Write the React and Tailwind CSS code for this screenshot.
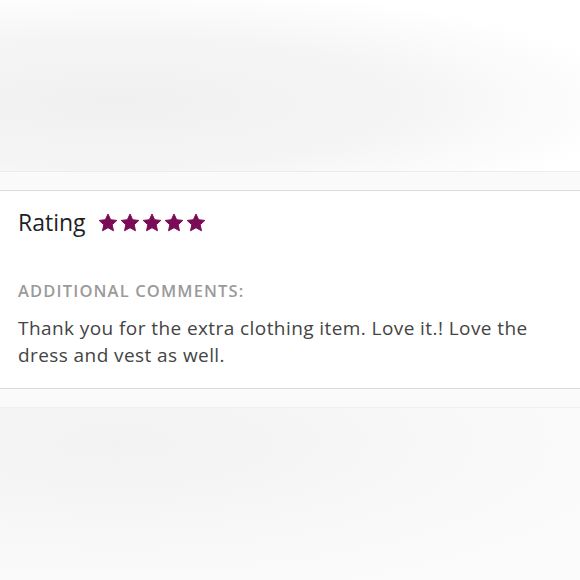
export default function App() {
  const Star = () => (
    <svg width="20" height="19" viewBox="0 0 24 23" className="block">
      <path d="M12 1.2l3.2 6.9 7.5.9-5.6 5.1 1.5 7.4L12 17.8l-6.6 3.7 1.5-7.4L1.3 9l7.5-.9z" fill="#7a0b55" stroke="#7a0b55" strokeWidth="1.2" strokeLinejoin="round" />
    </svg>
  );
  return (
    <div className="w-[580px] h-[580px] overflow-hidden flex flex-col bg-[#f6f5f6]" style={{ fontFamily: '"Open Sans", "Liberation Sans", sans-serif' }}>
      <div className="h-[171px] bg-[radial-gradient(ellipse_at_20%_60%,#f1f0f1_0%,#f6f5f6_45%,#ffffff_80%)]" />
      <div className="h-[20px] bg-[#fafafa] border-t border-[#ececec] border-b border-b-[#dcdcdc]" />
      <div className="h-[197px] bg-white flex flex-col px-[18px]">
        <div className="flex items-center mt-[17px] h-[28px]">
          <span className="text-[23px] font-medium text-[#1f1f1f] leading-none">Rating</span>
          <div className="flex gap-[2px] ml-[12px]">
            <Star /><Star /><Star /><Star /><Star />
          </div>
        </div>
        <div className="mt-[47px] text-[16.5px] tracking-[1.15px] text-[#9a9a9a] font-semibold uppercase leading-none">Additional Comments:</div>
        <div className="mt-[15px] text-[19px] tracking-[0.42px] leading-[27px] text-[#444]">Thank you for the extra clothing item. Love it.! Love the dress and vest as well.</div>
      </div>
      <div className="h-[20px] bg-[#fafafa] border-t border-[#dcdcdc] border-b border-b-[#efefef]" />
      <div className="flex-1 bg-[radial-gradient(ellipse_at_20%_20%,#f2f2f2_0%,#f8f8f8_50%,#fbfbfb_90%)]" />
    </div>
  );
}
